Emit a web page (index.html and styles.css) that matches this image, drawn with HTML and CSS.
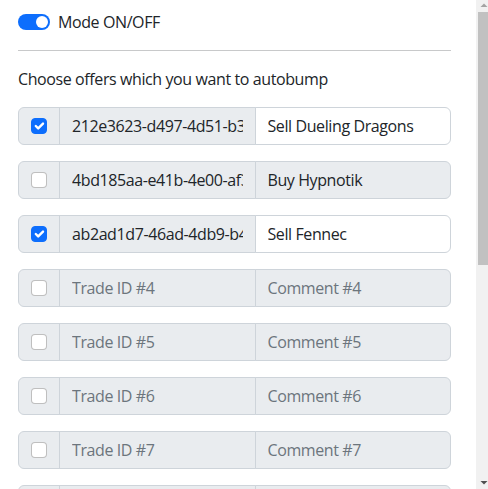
FILE: index.html
```html
<!DOCTYPE html>
<html>
<head>
<meta charset="utf-8">
<link rel="stylesheet" href="styles.css">
</head>
<body>
<div class="wrap">
  <div class="switch-row">
    <span class="switch"><span class="knob"></span></span>
    <span class="switch-label">Mode ON/OFF</span>
  </div>
  <hr class="sep">
  <p class="intro">Choose offers which you want to autobump</p>

  <div class="group">
    <span class="cell"><span class="check on"><svg viewBox="0 0 20 20" width="16" height="16"><path fill="none" stroke="#fff" stroke-linecap="round" stroke-linejoin="round" stroke-width="3" d="M6 10l3 3l6-6"/></svg></span></span>
    <input class="field dis" value="212e3623-d497-4d51-b3f2-9c1a7e5d4b21" disabled>
    <input class="field" value="Sell Dueling Dragons">
  </div>
  <div class="group">
    <span class="cell"><span class="check"></span></span>
    <input class="field dis" value="4bd185aa-e41b-4e00-af3c-1d2e9b7f8a60" disabled>
    <input class="field dis" value="Buy Hypnotik" disabled>
  </div>
  <div class="group">
    <span class="cell"><span class="check on"><svg viewBox="0 0 20 20" width="16" height="16"><path fill="none" stroke="#fff" stroke-linecap="round" stroke-linejoin="round" stroke-width="3" d="M6 10l3 3l6-6"/></svg></span></span>
    <input class="field dis" value="ab2ad1d7-46ad-4db9-b4e1-7f3c2a9d0e55" disabled>
    <input class="field" value="Sell Fennec">
  </div>
  <div class="group">
    <span class="cell"><span class="check"></span></span>
    <input class="field dis" placeholder="Trade ID #4" disabled>
    <input class="field dis" placeholder="Comment #4" disabled>
  </div>
  <div class="group">
    <span class="cell"><span class="check"></span></span>
    <input class="field dis" placeholder="Trade ID #5" disabled>
    <input class="field dis" placeholder="Comment #5" disabled>
  </div>
  <div class="group">
    <span class="cell"><span class="check"></span></span>
    <input class="field dis" placeholder="Trade ID #6" disabled>
    <input class="field dis" placeholder="Comment #6" disabled>
  </div>
  <div class="group">
    <span class="cell"><span class="check"></span></span>
    <input class="field dis" placeholder="Trade ID #7" disabled>
    <input class="field dis" placeholder="Comment #7" disabled>
  </div>
  <div class="group">
    <span class="cell"><span class="check"></span></span>
    <input class="field dis" placeholder="Trade ID #8" disabled>
    <input class="field dis" placeholder="Comment #8" disabled>
  </div>
  <div class="group">
    <span class="cell"><span class="check"></span></span>
    <input class="field dis" placeholder="Trade ID #9" disabled>
    <input class="field dis" placeholder="Comment #9" disabled>
  </div>
  <div class="group">
    <span class="cell"><span class="check"></span></span>
    <input class="field dis" placeholder="Trade ID #10" disabled>
    <input class="field dis" placeholder="Comment #10" disabled>
  </div>
</div>

<div class="scrollbar" aria-hidden="true">
  <div class="sb-btn"><svg width="12" height="12" viewBox="0 0 12 12"><path d="M5 3.5L8.5 7H1.5z" fill="#a3a3a3" transform="translate(3 0)"/></svg></div>
  <div class="sb-thumb"></div>
  <div class="sb-fill"></div>
  <div class="sb-btn"><svg width="12" height="12" viewBox="0 0 12 12"><path d="M1.5 4H8.5L5 7.5z" fill="#505050" transform="translate(3 0)"/></svg></div>
</div>
</body>
</html>
```

FILE: styles.css
```css
html, body {
  margin: 0;
  padding: 0;
  background: #fff;
}
body {
  font-family: "Open Sans", "Noto Sans", sans-serif;
  font-size: 16px;
  line-height: 24px;
  letter-spacing: -0.4px;
  color: #212529;
}
.wrap {
  width: 433px;
  margin-left: 18px;
  padding-top: 10px;
}
.switch-row {
  display: flex;
  align-items: center;
  gap: 8px;
  height: 24px;
}
.switch {
  width: 32px;
  height: 16px;
  border-radius: 8px;
  background: #0d6efd;
  display: flex;
  align-items: center;
  justify-content: flex-end;
  padding-right: 2px;
  box-sizing: border-box;
}
.knob {
  width: 12px;
  height: 12px;
  border-radius: 50%;
  background: #fff;
}
.sep {
  margin: 16px 0;
  border: 0;
  border-top: 1px solid #c8c9ca;
  height: 0;
}
.intro {
  margin: 0 0 16px 0;
}
.group {
  display: flex;
  height: 38px;
  margin-bottom: 16px;
}
.cell {
  width: 42px;
  box-sizing: border-box;
  display: flex;
  align-items: center;
  justify-content: center;
  background: #e9ecef;
  border: 1px solid #ced4da;
  border-radius: 6px 0 0 6px;
}
.check {
  width: 16px;
  height: 16px;
  box-sizing: border-box;
  border: 1px solid rgba(0,0,0,.25);
  border-radius: 4px;
  background: #fff;
  display: flex;
}
.check.on {
  background: #0d6efd;
  border-color: #0d6efd;
}
.check svg {
  margin: -1px;
}
.field {
  flex: 1 1 0;
  min-width: 0;
  margin: 0 0 0 -1px;
  box-sizing: border-box;
  height: 38px;
  padding: 6px 12px;
  font: inherit;
  letter-spacing: -0.4px;
  color: #212529;
  background: #fff;
  border: 1px solid #ced4da;
  border-radius: 0;
  outline: none;
}
.field:last-child {
  border-radius: 0 6px 6px 0;
}
.field.dis {
  background: #e9ecef;
  opacity: 1;
  -webkit-text-fill-color: #212529;
}
.field::placeholder {
  color: #6c757d;
  -webkit-text-fill-color: #6c757d;
  opacity: 1;
}
.scrollbar {
  position: fixed;
  top: 0;
  right: 0;
  width: 12px;
  height: 100vh;
  background: #f1f1f1;
  display: flex;
  flex-direction: column;
}
.sb-btn {
  height: 12px;
  flex: none;
}
.sb-btn svg {
  display: block;
}
.sb-thumb {
  height: 253px;
  margin-left: 2px;
  background: #c1c1c1;
  flex: none;
}
.sb-fill {
  flex: 1;
}
```
